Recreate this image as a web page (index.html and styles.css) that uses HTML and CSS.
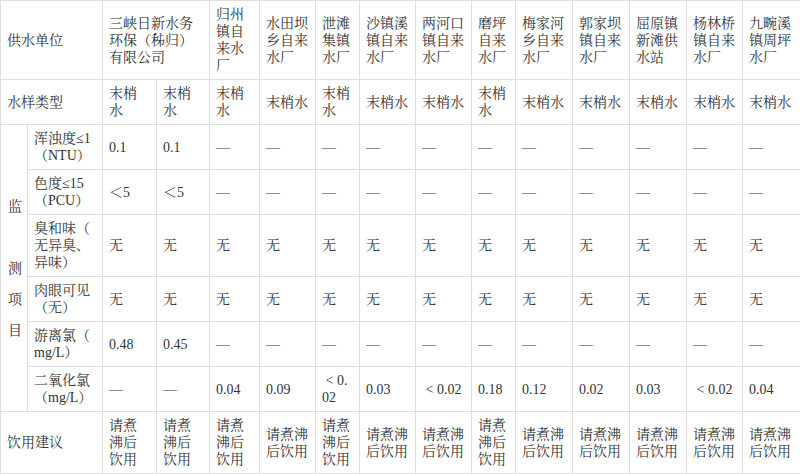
FILE: index.html
```html
<!DOCTYPE html>
<html lang="zh-CN">
<head>
<meta charset="utf-8">
<title>水质检测</title>
<link rel="stylesheet" href="styles.css">
</head>
<body>
<table class="wq">
  <colgroup>
    <col class="c27"><col class="c75"><col class="c54"><col class="c53"><col class="c50"><col class="c56"><col class="c44"><col class="c56"><col class="c56"><col class="c44"><col class="c57"><col class="c57"><col class="c57"><col class="c56"><col class="c58">
  </colgroup>
  <tr class="r4">
    <td colspan="2">供水单位</td>
    <td colspan="2">三峡日新水务环保（秭归）有限公司</td>
    <td>归州镇自来水厂</td>
    <td>水田坝乡自来水厂</td>
    <td>泄滩集镇水厂</td>
    <td>沙镇溪镇自来水厂</td>
    <td>两河口镇自来水厂</td>
    <td>磨坪自来水厂</td>
    <td>梅家河乡自来水厂</td>
    <td>郭家坝镇自来水厂</td>
    <td>屈原镇新滩供水站</td>
    <td>杨林桥镇自来水厂</td>
    <td>九畹溪镇周坪水厂</td>
  </tr>
  <tr>
    <td colspan="2">水样类型</td>
    <td>末梢水</td><td>末梢水</td><td>末梢水</td><td>末梢水</td><td>末梢水</td><td>末梢水</td><td>末梢水</td><td>末梢水</td><td>末梢水</td><td>末梢水</td><td>末梢水</td><td>末梢水</td><td>末梢水</td>
  </tr>
  <tr>
    <td rowspan="6" class="vert">监<br><br>测<br>项<br>目</td>
    <td>浑浊度≤1（NTU）</td>
    <td>0.1</td><td>0.1</td><td>—</td><td>—</td><td>—</td><td>—</td><td>—</td><td>—</td><td>—</td><td>—</td><td>—</td><td>—</td><td>—</td>
  </tr>
  <tr>
    <td>色度≤15（PCU）</td>
    <td>＜5</td><td>＜5</td><td>—</td><td>—</td><td>—</td><td>—</td><td>—</td><td>—</td><td>—</td><td>—</td><td>—</td><td>—</td><td>—</td>
  </tr>
  <tr>
    <td>臭和味（无异臭、异味）</td>
    <td>无</td><td>无</td><td>无</td><td>无</td><td>无</td><td>无</td><td>无</td><td>无</td><td>无</td><td>无</td><td>无</td><td>无</td><td>无</td>
  </tr>
  <tr>
    <td>肉眼可见（无）</td>
    <td>无</td><td>无</td><td>无</td><td>无</td><td>无</td><td>无</td><td>无</td><td>无</td><td>无</td><td>无</td><td>无</td><td>无</td><td>无</td>
  </tr>
  <tr>
    <td>游离氯（mg/L）</td>
    <td>0.48</td><td>0.45</td><td>—</td><td>—</td><td>—</td><td>—</td><td>—</td><td>—</td><td>—</td><td>—</td><td>—</td><td>—</td><td>—</td>
  </tr>
  <tr>
    <td>二氧化氯（mg/L）</td>
    <td>—</td><td>—</td><td>0.04</td><td>0.09</td><td>&nbsp;&lt; 0.02</td><td>0.03</td><td>&nbsp;&lt; 0.02</td><td>0.18</td><td>0.12</td><td>0.02</td><td>0.03</td><td>&nbsp;&lt; 0.02</td><td>0.04</td>
  </tr>
  <tr>
    <td colspan="2">饮用建议</td>
    <td>请煮沸后饮用</td><td>请煮沸后饮用</td><td>请煮沸后饮用</td><td>请煮沸后饮用</td><td>请煮沸后饮用</td><td>请煮沸后饮用</td><td>请煮沸后饮用</td><td>请煮沸后饮用</td><td>请煮沸后饮用</td><td>请煮沸后饮用</td><td>请煮沸后饮用</td><td>请煮沸后饮用</td><td>请煮沸后饮用</td>
  </tr>
</table>
</body>
</html>
```

FILE: styles.css
```css
html, body {
  margin: 0;
  padding: 0;
  background: #ffffff;
}

.wq {
  width: 800px;
  table-layout: fixed;
  border-collapse: collapse;
  font-family: "Liberation Serif", "Noto Serif CJK SC", "Noto Sans CJK SC", serif;
  font-size: 14px;
  line-height: 17px;
  color: #333333;
}

.wq td {
  border: 1px solid #dddddd;
  padding: 5px 6px;
  vertical-align: middle;
  text-align: left;
  word-break: break-all;
  line-break: anywhere;
}

.wq td.vert {
  line-height: 31px;
  padding: 0 6px 0 7px;
}

.c27 { width: 27px; }
.c75 { width: 75px; }
.c54 { width: 54px; }
.c53 { width: 53px; }
.c50 { width: 50px; }
.c56 { width: 56px; }
.c44 { width: 44px; }
.c57 { width: 57px; }
.c58 { width: 58px; }
```
